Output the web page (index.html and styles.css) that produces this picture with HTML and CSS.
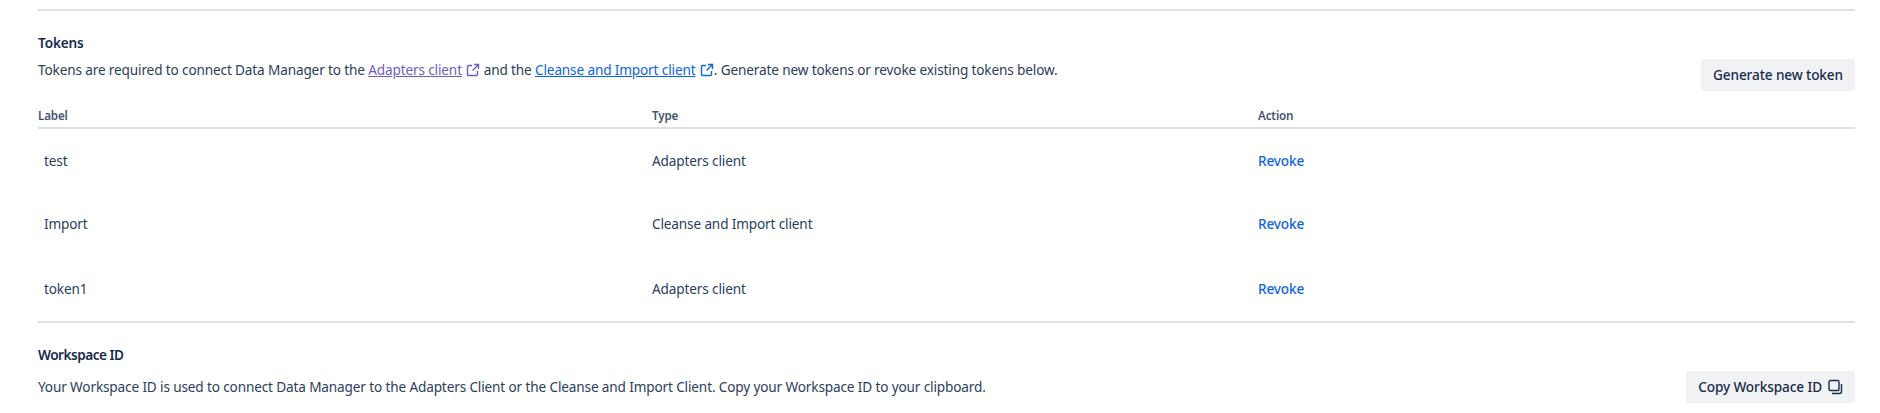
FILE: index.html
```html
<!doctype html>
<html lang="en">
  <head>
    <meta charset="UTF-8" />
    <title>Tokens</title>
    <link rel="stylesheet" href="styles.css">
  </head>
  <body>
    <section class="section tokens">
      <div class="section-head">
        <div>
          <h2>Tokens</h2>
          <p>
            Tokens are required to connect Data Manager to the
            <a class="visited" href="#">Adapters client</a>
            <svg class="ext visited-icon" viewBox="0 0 14 14"><path d="M6 2.5H2.5a1 1 0 0 0-1 1v8a1 1 0 0 0 1 1h8a1 1 0 0 0 1-1V8M8 1.5h4.5V6M12.5 1.5 6.5 7.5"/></svg>
            and the
            <a href="#">Cleanse and Import client</a>
            <svg class="ext" viewBox="0 0 14 14"><path d="M6 2.5H2.5a1 1 0 0 0-1 1v8a1 1 0 0 0 1 1h8a1 1 0 0 0 1-1V8M8 1.5h4.5V6M12.5 1.5 6.5 7.5"/></svg><span>. Generate new tokens or revoke existing tokens below.</span>
          </p>
        </div>
        <button class="btn" type="button">Generate new token</button>
      </div>
      <table>
        <thead>
          <tr>
            <th class="col-label">Label</th>
            <th class="col-type">Type</th>
            <th>Action</th>
          </tr>
        </thead>
        <tbody>
          <tr>
            <td class="name">test</td>
            <td>Adapters client</td>
            <td><a class="revoke" href="#">Revoke</a></td>
          </tr>
          <tr>
            <td class="name">Import</td>
            <td>Cleanse and Import client</td>
            <td><a class="revoke" href="#">Revoke</a></td>
          </tr>
          <tr>
            <td class="name">token1</td>
            <td>Adapters client</td>
            <td><a class="revoke" href="#">Revoke</a></td>
          </tr>
        </tbody>
      </table>
    </section>
    <section class="section workspace">
      <h2 class="tight">Workspace ID</h2>
      <div class="section-row">
        <p>Your Workspace ID is used to connect Data Manager to the Adapters Client or the Cleanse and Import Client. Copy your Workspace ID to your clipboard.</p>
        <button class="btn" type="button">
          Copy Workspace ID
          <svg class="copy" viewBox="0 0 16 16"><path d="M3.5 1.5h7a1.5 1.5 0 0 1 1.5 1.5v7a1.5 1.5 0 0 1-1.5 1.5h-7A1.5 1.5 0 0 1 2 10V3a1.5 1.5 0 0 1 1.5-1.5ZM14.5 5v7.5a2 2 0 0 1-2 2H5"/></svg>
        </button>
      </div>
    </section>
  </body>
</html>
```

FILE: styles.css
```css
* {
  box-sizing: border-box;
}

body {
  margin: 0;
  padding: 9px 25px 0 38px;
  font-family: "Noto Sans", sans-serif;
  font-size: 13.6px;
  letter-spacing: -0.14px;
  line-height: 20px;
  color: #2c3e5d;
  background: #fff;
}

h2 {
  margin: 0;
  font-size: 13.6px;
  line-height: 20px;
  font-weight: 600;
  color: #172b4d;
}

h2.tight {
  letter-spacing: -0.5px;
}

p {
  margin: 0;
}

a {
  color: #0c66e4;
}

a.visited {
  color: #6e5dc6;
}

.section {
  border-top: 2px solid #dcdfe4;
}

.tokens {
  padding-top: 22px;
}

.section-head {
  display: flex;
  justify-content: space-between;
}

.section-head p {
  margin-top: 7px;
}

.section-head .btn {
  margin-top: 26px;
}

.ext {
  width: 14px;
  height: 14px;
  vertical-align: -2px;
  margin-left: 1px;
  fill: none;
  stroke: #0c66e4;
  stroke-width: 1.4;
}

.visited-icon {
  stroke: #6e5dc6;
}

.btn {
  height: 32px;
  padding: 0 12px;
  border: none;
  border-radius: 3px;
  background: #f1f2f4;
  color: #172b4d;
  font: inherit;
  letter-spacing: -0.1px;
  font-weight: 500;
  display: inline-flex;
  align-items: center;
  gap: 5px;
  white-space: nowrap;
}

.copy {
  width: 16px;
  height: 16px;
  fill: none;
  stroke: #172b4d;
  stroke-width: 1.4;
}

table {
  width: 100%;
  border-collapse: collapse;
  table-layout: fixed;
  margin-top: 8px;
}

th {
  text-align: left;
  font-size: 11.6px;
  line-height: 16px;
  font-weight: 600;
  color: #44546f;
  padding: 9px 0 3px;
  border-bottom: 2px solid #dcdfe4;
}

.col-label {
  width: 614px;
}

.col-type {
  width: 606px;
}

td {
  height: 64.34px;
  padding: 0;
}

td.name {
  padding-left: 6px;
}

.revoke {
  text-decoration: none;
  font-weight: 500;
}

.workspace {
  padding-top: 22px;
}

.section-row {
  display: flex;
  justify-content: space-between;
  align-items: center;
  margin-top: 6px;
}
```
